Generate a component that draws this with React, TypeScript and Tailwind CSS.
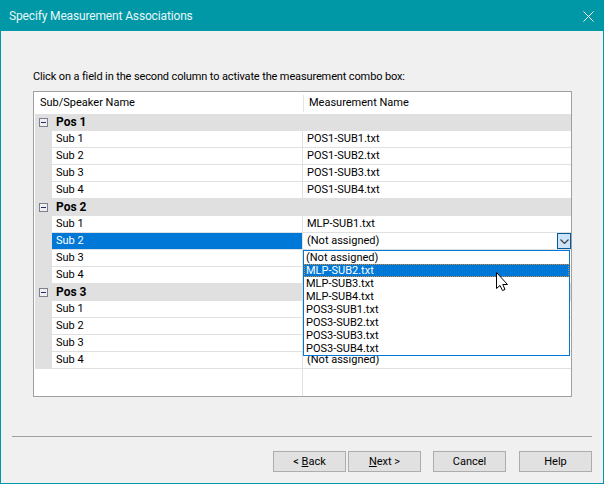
const groups = [
  { name: 'Pos 1', subs: ['POS1-SUB1.txt', 'POS1-SUB2.txt', 'POS1-SUB3.txt', 'POS1-SUB4.txt'] },
  { name: 'Pos 2', subs: ['MLP-SUB1.txt', '(Not assigned)', '', ''] },
  { name: 'Pos 3', subs: ['', '', '', '(Not assigned)'] },
];

const options = [
  '(Not assigned)',
  'MLP-SUB2.txt',
  'MLP-SUB3.txt',
  'MLP-SUB4.txt',
  'POS3-SUB1.txt',
  'POS3-SUB2.txt',
  'POS3-SUB3.txt',
  'POS3-SUB4.txt',
];

function Collapse() {
  return (
    <div className="flex h-[9px] w-[9px] items-center justify-center border border-[#7f7f8f] bg-[#eeeeee]">
      <div className="h-px w-[5px] bg-[#1f2f6f]" />
    </div>
  );
}

function SubRow({ label, value, selected }: { label: string; value: string; selected: boolean }) {
  return (
    <div className="flex h-[17px] w-full">
      <div className="w-[17px] bg-[#e0e0e0]" />
      <div
        className={`flex w-[250px] items-center border-b border-[#e0e0e0] pl-1 pt-px ${selected ? 'bg-[#0078d7] text-white' : ''}`}
      >
        {label}
      </div>
      <div className="flex flex-1 items-center justify-between border-b border-l border-[#e0e0e0] pl-1">
        <span className="pt-px">{value}</span>
        {selected && (
          <div className="flex h-[16px] w-[14px] items-center justify-center border border-[#005a9e] bg-[#cce4f7]">
            <svg width="9" height="5" viewBox="0 0 9 5">
              <path d="M0.5 0.5 L4.5 4.5 L8.5 0.5" fill="none" stroke="#444444" strokeWidth="1.2" />
            </svg>
          </div>
        )}
      </div>
    </div>
  );
}

function DialogButton({ className, children }: { className: string; children: React.ReactNode }) {
  return (
    <button className={`h-[21px] w-[73px] border border-[#adadad] bg-[#e1e1e1] pt-px leading-[18px] ${className}`}>
      {children}
    </button>
  );
}

export default function App() {
  return (
    <div className="relative flex h-[484px] w-[604px] flex-col border border-[#0097a7] bg-[#f0f0f0] font-['Roboto',sans-serif] text-[11px] text-black">
      {/* Title bar */}
      <header className="flex h-[30px] items-center justify-between bg-[#0097a7] pl-2 pr-[9px] text-[12px] tracking-[-0.15px] text-[#e6f7f7]">
        <span>Specify Measurement Associations</span>
        <svg width="11" height="11" viewBox="0 0 11 11">
          <path d="M0.5 0.5 L10.5 10.5 M10.5 0.5 L0.5 10.5" fill="none" stroke="#ffffff" strokeWidth="1" />
        </svg>
      </header>

      <main className="flex flex-1 flex-col px-[32px] pt-[38px]">
        <p className="h-[22px] leading-[16px] tracking-[-0.13px]">
          Click on a field in the second column to activate the measurement combo box:
        </p>

        {/* Grid */}
        <div className="relative h-[306px] w-[539px] border border-[#a0a0a0] bg-white pl-px">
          <div className="flex h-[22px] items-center pt-px">
            <div className="w-[268px] pl-[5px]">Sub/Speaker Name</div>
            <div className="flex-1 border-l border-[#e5e5e5] pl-[5px]">Measurement Name</div>
          </div>
          {groups.map((group, g) => (
            <div key={group.name}>
              <div className="flex h-[17px] items-center bg-[#e0e0e0]">
                <div className="flex w-[17px] justify-center">
                  <Collapse />
                </div>
                <span className="pb-px pl-1 text-[12px] font-bold">{group.name}</span>
              </div>
              {group.subs.map((value, i) => (
                <SubRow key={i} label={`Sub ${i + 1}`} value={value} selected={g === 1 && i === 1} />
              ))}
            </div>
          ))}
          <div className="ml-[267px] h-[27px] border-l border-[#e0e0e0]" />

          {/* Open combo list */}
          <div className="absolute left-[269px] top-[158px] w-[267px] border border-[#0078d7] bg-white leading-[13px]">
            {options.map((opt) => (
              <div
                key={opt}
                className={`h-[13px] pl-[2px] ${opt === 'MLP-SUB2.txt' ? 'bg-[#0078d7] text-white outline-1 -outline-offset-1 outline-dotted outline-[#e08a30]' : ''}`}
              >
                {opt}
              </div>
            ))}
          </div>

          {/* Mouse pointer */}
          <svg className="absolute left-[462px] top-[180px]" width="13" height="20" viewBox="0 0 13 20">
            <path
              d="M0.5 0.5 L0.5 16.5 L4 13.5 L6.5 18.5 L9 17.5 L6.8 12.5 L11.5 12.5 Z"
              fill="#ffffff"
              stroke="#000000"
              strokeWidth="1"
            />
          </svg>
        </div>

        <div className="mt-[39px] -mx-[21px] h-px bg-[#a0a0a0]" />

        {/* Buttons */}
        <div className="-mr-[21px] mt-[14px] flex justify-end">
          <DialogButton className="">
            &lt; <span className="underline">B</span>ack
          </DialogButton>
          <DialogButton className="ml-[2px]">
            <span className="underline">N</span>ext &gt;
          </DialogButton>
          <DialogButton className="ml-[12px]">Cancel</DialogButton>
          <DialogButton className="ml-[13px]">Help</DialogButton>
        </div>
      </main>
    </div>
  );
}
